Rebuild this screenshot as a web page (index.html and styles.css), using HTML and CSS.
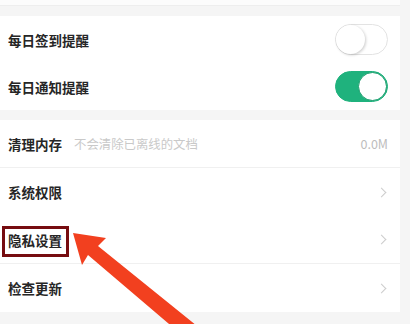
FILE: index.html
```html
<!DOCTYPE html>
<html>
<head>
    <title>设置</title>
    <link rel="stylesheet" href="styles.css">
</head>

<body>
    <div class="page">
        <div class="top-strip"></div>

        <div class="group">
            <div class="row">
                <span class="label">每日签到提醒</span>
                <span class="switch"><span class="knob"></span></span>
            </div>
            <div class="row">
                <span class="label">每日通知提醒</span>
                <span class="switch on"><span class="knob"></span></span>
            </div>
        </div>

        <div class="group">
            <div class="row line">
                <span class="label">清理内存</span>
                <span class="hint">不会清除已离线的文档</span>
                <span class="value">0.0M</span>
            </div>
            <div class="row">
                <span class="label">系统权限</span>
                <span class="chevron"></span>
            </div>
            <div class="row line">
                <span class="label marked">隐私设置</span>
                <span class="chevron"></span>
            </div>
            <div class="row">
                <span class="label">检查更新</span>
                <span class="chevron"></span>
            </div>
        </div>
    </div>

    <svg class="arrow" width="410" height="324" viewBox="0 0 410 324">
        <polygon points="73,233 106,238 98,246 202,330 189,341 88,255 82,265" fill="#f2401f"/>
    </svg>
</body>
</html>
```

FILE: styles.css
```css
* {
    margin: 0;
    padding: 0;
    box-sizing: border-box;
}

body {
    width: 410px;
    height: 324px;
    overflow: hidden;
    background: #f5f5f5;
    font-family: "Noto Sans CJK SC", "Noto Sans", sans-serif;
    position: relative;
}

.page {
    width: 400px;
}

.top-strip {
    height: 6px;
    background: #fcfcfc;
    border-bottom: 1px solid #eeeeee;
    margin-bottom: 10px;
}

.group {
    background: #ffffff;
    margin-bottom: 10px;
}

.row {
    height: 47px;
    display: flex;
    align-items: center;
    padding: 0 12px 0 8px;
}
.group:last-child .row {
    height: 48px;
}
.row.line {
    border-bottom: 1px solid #f0f0f0;
}

.label {
    font-size: 13.5px;
    line-height: 20px;
    font-weight: 700;
    color: #262626;
}
.marked {
    position: relative;
}
.marked::after {
    content: '';
    position: absolute;
    top: -4px;
    bottom: -7px;
    left: -6px;
    right: -7px;
    border: 3px solid #760c10;
}

.hint {
    margin-left: 12px;
    font-size: 12.4px;
    color: #c9c9c9;
}

.value {
    margin-left: auto;
    font-size: 12.5px;
    color: #bdbdbd;
}

.chevron {
    margin-left: auto;
    width: 7px;
    height: 7px;
    border-top: 1px solid #cccccc;
    border-right: 1px solid #cccccc;
    transform: rotate(45deg);
    margin-right: 3px;
}

.switch {
    margin-left: auto;
    width: 53px;
    height: 31px;
    border-radius: 16px;
    border: 1px solid #e3e3e3;
    background: #ffffff;
    position: relative;
}
.knob {
    position: absolute;
    top: 0;
    left: 0;
    width: 29px;
    height: 29px;
    border-radius: 50%;
    background: #ffffff;
    box-shadow: 1px 1px 3px rgba(0, 0, 0, 0.2);
}
.switch.on {
    background: #1fb27d;
    border-color: #1fb27d;
}
.switch.on .knob {
    left: auto;
    right: 0;
    box-shadow: none;
    border: 1.5px solid #1a9e6d;
}

.arrow {
    position: absolute;
    left: 0;
    top: 0;
}
```
